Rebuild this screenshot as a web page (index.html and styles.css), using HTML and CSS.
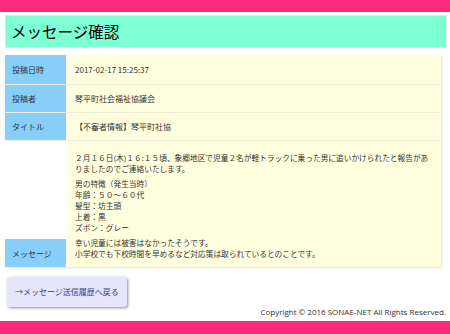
FILE: index.html
```html
<!DOCTYPE html>
<html lang="ja">
<head>
    <meta charset="UTF-8">
    <meta name="viewport" content="width=device-width, initial-scale=1.0">
    <title>メッセージ確認</title>
    <link rel="stylesheet" href="styles.css">
</head>
<body>
    <div class="top-bar"></div>

    <div id="container">
        <h1 class="page-title">メッセージ確認</h1>

        <div class="detail">
            <div class="row">
                <div class="label">投稿日時</div>
                <div class="value">2017-02-17 15:25:37</div>
            </div>
            <div class="row">
                <div class="label">投稿者</div>
                <div class="value">琴平町社会福祉協議会</div>
            </div>
            <div class="row">
                <div class="label">タイトル</div>
                <div class="value">【不審者情報】琴平町社協</div>
            </div>
            <div class="row row-message">
                <div class="label">メッセージ</div>
                <div class="value message">
                    <p>２月１６日(木)１６:１５頃、象郷地区で児童２名が軽トラックに乗った男に追いかけられたと報告がありましたのでご連絡いたします。</p>
                    <p>男の特徴（発生当時）<br>年齢：５０～６０代<br>髪型：坊主頭<br>上着：黒<br>ズボン：グレー</p>
                    <p>幸い児童には被害はなかったそうです。<br>小学校でも下校時間を早めるなど対応策は取られているとのことです。</p>
                </div>
            </div>
        </div>

        <a class="btn" href="#">→メッセージ送信履歴へ戻る</a>

        <div class="copyright">Copyright © 2016 SONAE-NET All Rights Reserved.</div>
    </div>

    <div class="bottom-bar"></div>
</body>
</html>
```

FILE: styles.css
```css
/* 全体 */
body {
    margin: 0;
    padding: 0;
    font-family: "Noto Sans CJK JP", "Noto Sans", sans-serif;
    color: #333;
    background-color: #fff;
}

.top-bar {
    height: 12px;
    background-color: #ff2a7a;
}

.bottom-bar {
    height: 13px;
    background-color: #ff2a7a;
}

#container {
    padding: 3px 3px 0 5px;
}

.page-title {
    margin: 0;
    height: 31px;
    line-height: 31px;
    padding-left: 5px;
    font-size: 15.5px;
    font-weight: normal;
    color: #000;
    background-color: #7fffd4;
    border: 1px solid #e4e4e4;
}

/* 詳細テーブル */
.detail {
    margin-top: 7px;
    width: 436px;
    box-shadow: 1px 1px 2px rgba(0, 0, 0, 0.12);
}

.row {
    display: flex;
    align-items: flex-end;
    border-bottom: 1px solid #eeebd6;
}

.row:first-child .label,
.row:first-child .value {
    height: 29px;
}

.label {
    width: 62px;
    height: 27px;
    flex-shrink: 0;
    box-sizing: border-box;
    padding-left: 7px;
    display: flex;
    align-items: center;
    font-size: 8px;
    background-color: #87cefa;
    border-right: 1px solid #fff;
}

.row-message {
    border-bottom: none;
}

.row-message .label {
    height: 28px;
}

.value {
    flex: 1;
    height: 27px;
    box-sizing: border-box;
    padding-left: 8px;
    display: flex;
    align-items: center;
    font-size: 8px;
    background-color: #ffffe0;
}

.value.message {
    display: block;
    height: auto;
    padding: 11px 10px 8px 8px;
    font-size: 7.7px;
    line-height: 11px;
}

.message p {
    margin: 0 0 4px;
}

.message p:last-child {
    margin-bottom: 0;
}

/* ボタン */
.btn {
    display: inline-block;
    margin: 10px 0 0 2px;
    padding: 10px 8px;
    font-size: 8px;
    line-height: 10px;
    color: #3a3a8c;
    text-decoration: none;
    background-color: #e6e6fa;
    border-radius: 3px;
    box-shadow: 1px 1px 3px rgba(0, 0, 0, 0.45);
}

.copyright {
    text-align: right;
    margin: 0 1px 4px 0;
    line-height: 10px;
    font-family: "Open Sans", "Noto Sans", sans-serif;
    font-size: 8px;
    color: #333;
}
```
